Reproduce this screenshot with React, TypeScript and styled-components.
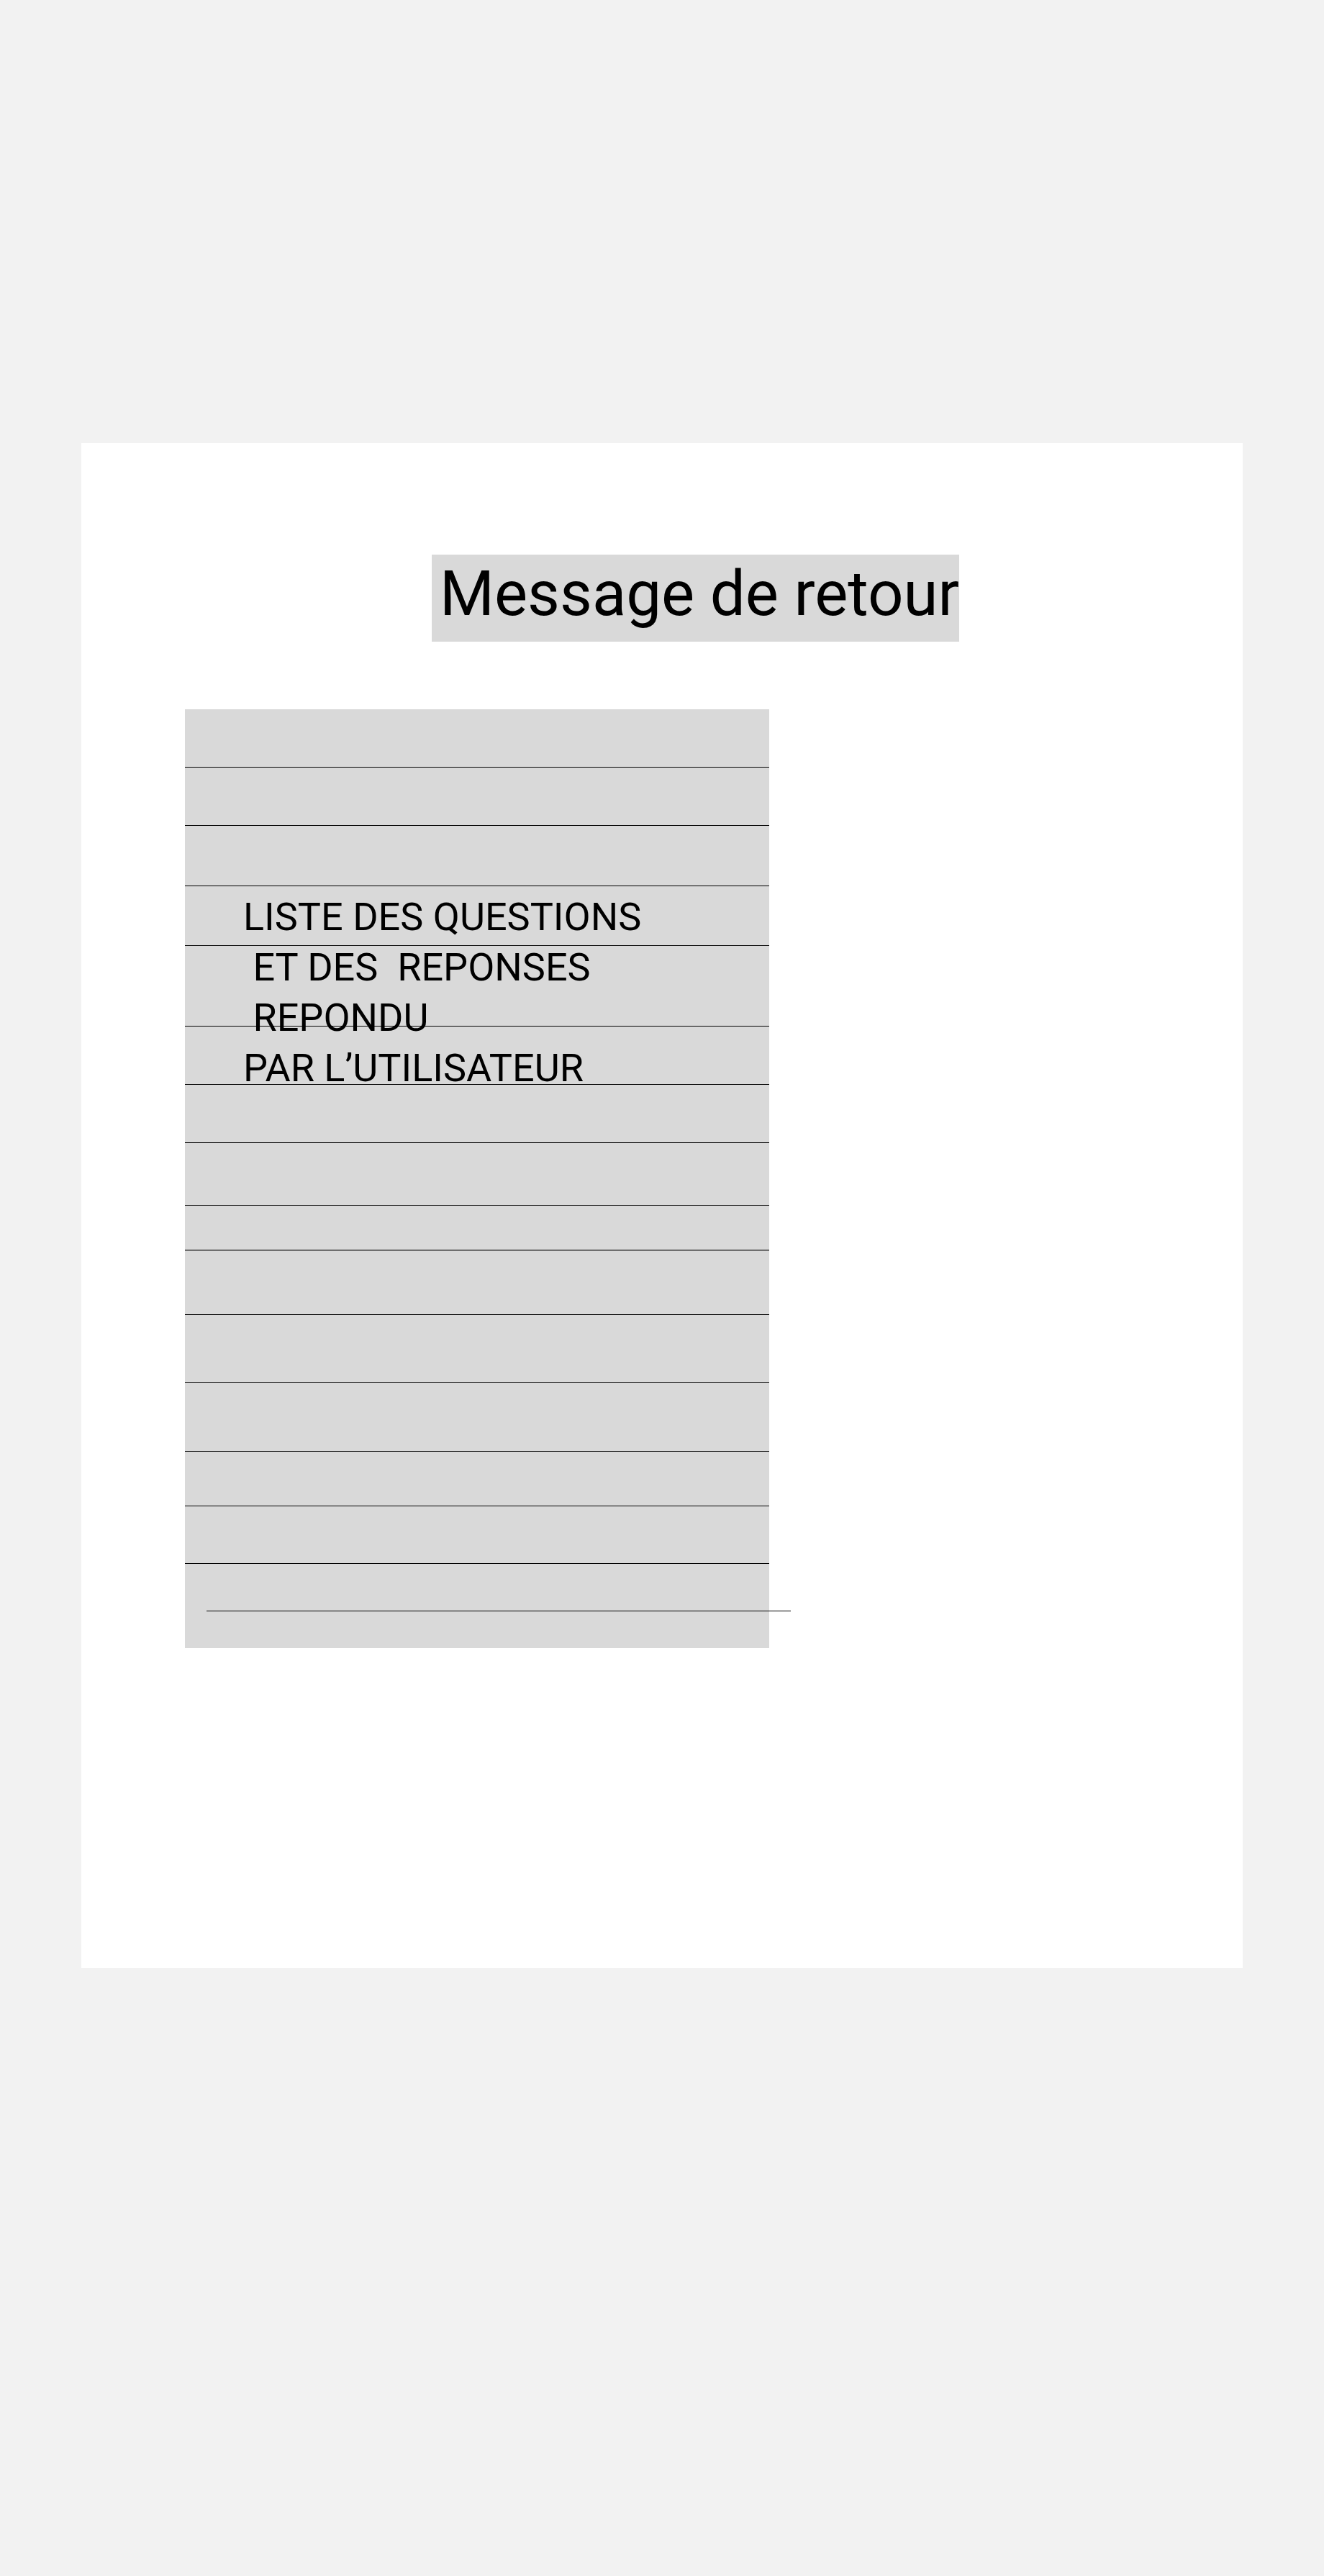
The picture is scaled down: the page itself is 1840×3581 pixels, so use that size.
import React from "react";
import styled, { createGlobalStyle } from "styled-components";

const GlobalStyle = createGlobalStyle`
  body {
    margin: 0;
    background: #f2f2f2;
    font-family: Roboto, "Liberation Sans", Arial, sans-serif;
  }
`;

const Page = styled.div`
  min-height: 3581px;
  box-sizing: border-box;
  padding: 616px 0 0 113px;
  background: #f2f2f2;
`;

const Card = styled.div`
  width: 1614px;
  height: 2120px;
  box-sizing: border-box;
  background: #ffffff;
  padding: 155px 0 0 0;
  display: flex;
  flex-direction: column;
`;

const TitleRow = styled.div`
  display: flex;
  padding-left: 487px;
`;

const TitleBox = styled.h1`
  margin: 0;
  width: 733px;
  height: 121px;
  box-sizing: border-box;
  padding: 3px 0 0 11px;
  background: #d9d9d9;
  color: #000;
  font-family: Roboto, "Liberation Sans", sans-serif;
  font-weight: 400;
  font-size: 87px;
  line-height: normal;
  white-space: nowrap;
`;

const Panel = styled.div`
  position: relative;
  margin: 94px 0 0 144px;
  width: 812px;
  height: 1305px;
  background: #d9d9d9;
  display: flex;
  flex-direction: column;
`;

const Row = styled.div<{ $h: number; $grey?: boolean }>`
  height: ${(p) => p.$h}px;
  flex-shrink: 0;
  border-bottom: ${(p) => (p.$grey ? "2px solid #6e6e6e" : "1px solid #000")};
`;

const QuestionText = styled.p`
  position: absolute;
  left: 81px;
  top: 254px;
  margin: 0;
  color: #000;
  font-family: Roboto, "Liberation Sans", sans-serif;
  font-size: 54px;
  line-height: 70px;
  white-space: pre;
`;

const StrayLine = styled.div`
  position: absolute;
  left: 30px;
  top: 1253px;
  width: 812px;
  height: 1px;
  background: #000;
`;

const rows = [
  { h: 80 },
  { h: 80 },
  { h: 83 },
  { h: 82 },
  { h: 111 },
  { h: 80 },
  { h: 80 },
  { h: 86 },
  { h: 61, grey: true },
  { h: 88 },
  { h: 93 },
  { h: 95 },
  { h: 75 },
  { h: 79 },
];

const App = () => {
  return (
    <Page>
      <GlobalStyle />
      <Card>
        <TitleRow>
          <TitleBox>Message de retour</TitleBox>
        </TitleRow>
        <Panel>
          {rows.map((r, i) => (
            <Row key={i} $h={r.h} $grey={r.grey} />
          ))}
          <QuestionText>
            {"LISTE DES QUESTIONS\n ET DES  REPONSES\n REPONDU\nPAR L\u2019UTILISATEUR"}
          </QuestionText>
          <StrayLine />
        </Panel>
      </Card>
    </Page>
  );
};

export default App;
